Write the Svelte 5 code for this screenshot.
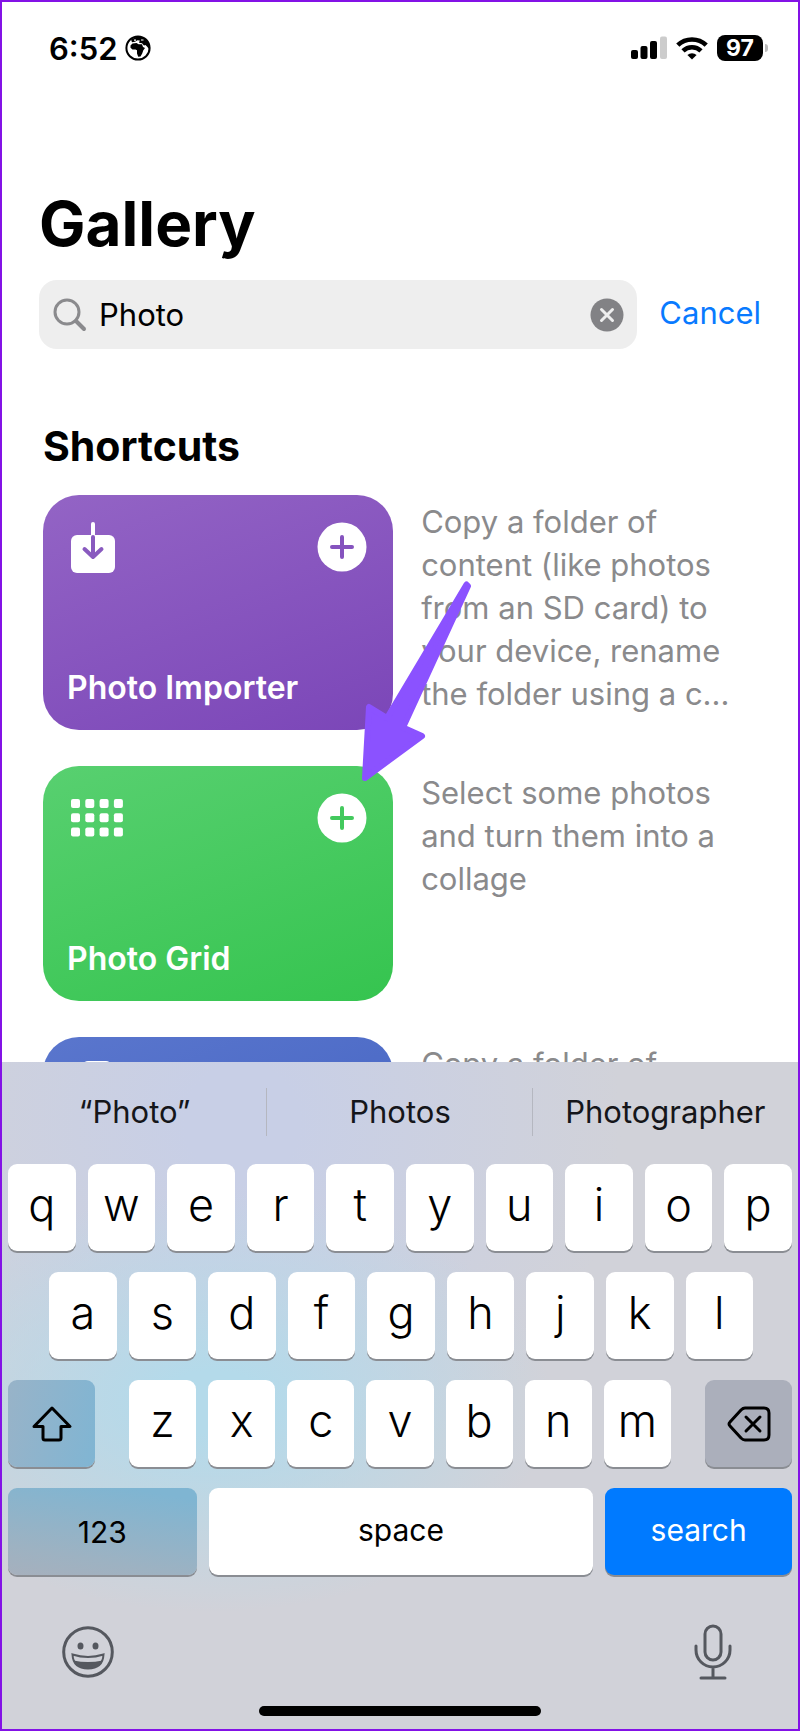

<script lang="ts">
  interface Shortcut {
    title: string;
    tone: string;
    icon: string;
    about: string;
  }

  const shortcuts: Shortcut[] = [
    {
      title: 'Photo Importer',
      tone: 'purple',
      icon: 'import',
      about:
        'Copy a folder of content (like photos from an SD card) to your device, rename the folder using a c...',
    },
    {
      title: 'Photo Grid',
      tone: 'green',
      icon: 'grid',
      about: 'Select some photos and turn them into a collage',
    },
    { title: '', tone: 'blue', icon: 'doc', about: 'Copy a folder of' },
  ];

  const suggestions = ['“Photo”', 'Photos', 'Photographer'];
  const topRow = [...'qwertyuiop'];
  const homeRow = [...'asdfghjkl'];
  const bottomRow = [...'zxcvbnm'];

  let query = $state('Photo');

  function press(key: string) {
    query += key;
  }
</script>

<div class="phone">
  <header class="status">
    <span class="time">6:52</span>
    <svg class="globe" viewBox="0 0 26 26" aria-hidden="true">
      <circle cx="13" cy="13" r="11.6" fill="#fff" stroke="#000" stroke-width="2" />
      <path d="M5.500 10.500 7.500 8.600 11.500 8 13.500 9.200 17 9.200 18 12 20 13 18.200 15.500 17.200 18.500 15.500 21.500 13.200 21.800 12 18.500 12 15.300 10.500 14.400 7.500 14.600 5.500 12.800Z" />
      <path d="M6 4.500 12 1.500 17 2 22 5 24.500 11 24 14 22 11.500 20.500 10 19 10.500 17 8.200 14 7.800 14.800 5.600 12.500 5.200 10 6.800 7 7.200Z" />
      <path d="M9 5.200h2M16 5h2.500" stroke="#fff" stroke-width="1.200" />
    </svg>
    <span class="spacer"></span>
    <svg class="signal" viewBox="0 0 36 24" aria-hidden="true">
      <rect x="0" y="14" width="7" height="9" rx="2" />
      <rect x="9.500" y="10" width="7" height="13" rx="2" />
      <rect x="19" y="5" width="7" height="18" rx="2" />
      <rect x="29" y="0.500" width="7" height="22.500" rx="2" fill="#ccc" />
    </svg>
    <svg class="wifi" viewBox="0 0 32 24" aria-hidden="true">
      <g fill="none" stroke="#000" stroke-width="4.600">
        <path d="M1.800 9.200a20.400 20.400 0 0 1 28.400 0" />
        <path d="M7 14.800a13 13 0 0 1 18 0" />
      </g>
      <path d="M16 23.500 11.400 19a6.800 6.800 0 0 1 9.200 0Z" />
    </svg>
    <span class="battery">97</span>
  </header>

  <main class="gallery">
    <h1>Gallery</h1>

    <form class="search" onsubmit={(e) => e.preventDefault()}>
      <div class="field">
        <svg class="lens" viewBox="0 0 34 34" aria-hidden="true">
          <circle cx="14" cy="14" r="12" />
          <path d="M23 23l8 8" stroke-width="4" />
        </svg>
        <input type="text" aria-label="Search gallery" bind:value={query} />
        <button type="button" class="clear" aria-label="Clear" onclick={() => (query = '')}>
          <svg viewBox="0 0 34 34" aria-hidden="true">
            <circle cx="17" cy="17" r="16.500" />
            <path d="M11.500 11.500l11 11M22.500 11.500l-11 11" />
          </svg>
        </button>
      </div>
      <button type="button" class="cancel">Cancel</button>
    </form>

    <section class="results">
      <h2>Shortcuts</h2>
      {#each shortcuts as item, i}
        <article class="row">
          <div class="card {item.tone}">
            <div class="card-top">
              {#if item.icon === 'import'}
                <svg class="glyph" viewBox="0 0 52 52" aria-hidden="true">
                  <rect x="0" y="13" width="44" height="38" rx="6" fill="#fff" />
                  <path d="M22 2v11" stroke="#fff" />
                  <path d="M22 15v19M13.500 27l8.500 8 8.500-8" stroke="#895abf" />
                </svg>
              {:else if item.icon === 'grid'}
                <svg class="glyph" viewBox="0 0 52 52" aria-hidden="true">
                  {#each [0, 1, 2] as r}
                    {#each [0, 1, 2, 3] as c}
                      <rect x={c * 14.3} y={6 + r * 14.3} width="9" height="9" rx="2" fill="#fff" />
                    {/each}
                  {/each}
                </svg>
              {:else}
                <svg class="glyph" viewBox="0 0 52 52" aria-hidden="true">
                  <rect x="11" y="-3" width="30" height="44" rx="6" fill="#fff" />
                </svg>
              {/if}
              <button class="add" aria-label="Add {item.title || 'shortcut'}">
                <svg viewBox="0 0 50 50" aria-hidden="true">
                  <circle cx="25" cy="25" r="24.500" fill="#fff" />
                  <path d="M25 15v20M15 25h20" />
                </svg>
              </button>
            </div>
            <h3>{item.title}</h3>
          </div>
          <p>{item.about}</p>
          {#if i === 0}
            <svg class="pointer" viewBox="0 0 70 206" aria-hidden="true">
              <path d="M104.500 6.500 25 140 7 129 3 200 60 158 41 149.500 106 8Z" />
            </svg>
          {/if}
        </article>
      {/each}
    </section>
  </main>

  <section class="keyboard" aria-label="Keyboard">
    <div class="suggestions">
      {#each suggestions as word}
        <button>{word}</button>
      {/each}
    </div>

    <div class="keys">
      <div class="key-row">
        {#each topRow as key}
          <button class="key" onclick={() => press(key)}>{key}</button>
        {/each}
      </div>
      <div class="key-row home">
        {#each homeRow as key}
          <button class="key" onclick={() => press(key)}>{key}</button>
        {/each}
      </div>
      <div class="key-row bottom">
        <button class="key shift" aria-label="Shift">
          <svg viewBox="0 0 42 38" aria-hidden="true">
            <path d="M21 3 39 21.500H30V33q0 2-2 2H14q-2 0-2-2V21.500H3Z" />
          </svg>
        </button>
        <div class="letters">
          {#each bottomRow as key}
            <button class="key" onclick={() => press(key)}>{key}</button>
          {/each}
        </div>
        <button class="key delete" aria-label="Delete" onclick={() => (query = query.slice(0, -1))}>
          <svg viewBox="0 0 44 38" aria-hidden="true">
            <path d="M18 3H37q5 0 5 5V30q0 5-5 5H18q-2 0-4-2L3 21q-2-2 0-4L14 5q2-2 4-2Z" />
            <path d="M19 12l14 14M33 12 19 26" />
          </svg>
        </button>
      </div>
      <div class="key-row words">
        <button class="key numbers">123</button>
        <button class="key space" onclick={() => press(' ')}>space</button>
        <button class="key go">search</button>
      </div>
    </div>

    <div class="tools">
      <button aria-label="Emoji">
        <svg class="emoji" viewBox="0 0 52 52" aria-hidden="true">
          <circle cx="26" cy="26" r="24.300" fill="none" stroke-width="3" />
          <ellipse cx="18.500" cy="20" rx="3" ry="3.500" stroke="none" />
          <ellipse cx="33.500" cy="20" rx="3" ry="3.500" stroke="none" />
          <path d="M10.500 28.500q15.500 5 31 0C41 38 35 42.500 26 42.500S11 38 10.500 28.500Z" fill="none" stroke-width="2" />
          <path d="M11.500 34.500q14.500 3 29 0C38 40 33 42.500 26 42.500S14 40 11.500 34.500Z" stroke="none" />
        </svg>
      </button>
      <button aria-label="Dictate">
        <svg class="mic" viewBox="0 0 38 56" aria-hidden="true">
          <rect x="11" y="2" width="16" height="34" rx="8" />
          <path d="M2 22v4a17 17 0 0 0 34 0v-4M19 43v10M7 54h24" />
        </svg>
      </button>
    </div>
    <div class="home-bar"></div>
  </section>
</div>

<style>
  :global(body) {
    margin: 0;
  }
  .phone {
    box-sizing: border-box;
    display: flex;
    flex-direction: column;
    height: 100vh;
    overflow: hidden;
    border: 2px solid #8312e6;
    background: #fff;
    color: #000;
    font-family: Inter, 'Liberation Sans', sans-serif;
  }
  button {
    margin: 0;
    padding: 0;
    border: none;
    background: none;
    color: inherit;
    font: inherit;
    cursor: pointer;
  }
  svg {
    display: block;
    flex: none;
  }

  .status {
    display: flex;
    align-items: center;
    height: 40px;
    padding: 26px 35px 0 47px;
  }
  .time {
    font-size: 31px;
    font-weight: 600;
  }
  .globe {
    width: 26px;
    height: 26px;
    margin-left: 7px;
  }
  .spacer {
    flex: 1;
  }
  .signal {
    width: 36px;
    height: 24px;
  }
  .wifi {
    width: 32px;
    height: 24px;
    margin: 0 9px;
  }
  .battery {
    position: relative;
    width: 46px;
    border-radius: 8px;
    background: #000;
    color: #fff;
    font-size: 23px;
    font-weight: 700;
    line-height: 26px;
    text-align: center;
  }
  .battery::after {
    content: '';
    position: absolute;
    top: 9px;
    right: -5px;
    width: 3px;
    height: 8px;
    border-radius: 0 4px 4px 0;
    background: #bbb;
  }

  .gallery {
    flex: 1;
    min-height: 0;
    overflow: hidden;
    padding: 118px 37px 0;
  }
  h1,
  h2,
  h3,
  p {
    margin: 0;
  }
  h1 {
    font-size: 62px;
    font-weight: 700;
    line-height: 76px;
  }
  .search {
    display: flex;
    align-items: center;
    gap: 22px;
    margin-top: 18px;
  }
  .field {
    flex: 1;
    min-width: 0;
    display: flex;
    align-items: center;
    height: 69px;
    padding: 0 13px 0 14px;
    border-radius: 18px;
    background: #eee;
  }
  .lens {
    width: 34px;
    height: 34px;
    fill: none;
    stroke: #8a8a8d;
    stroke-width: 3;
    stroke-linecap: round;
  }
  input {
    flex: 1;
    min-width: 0;
    padding: 0 12px;
    border: none;
    outline: none;
    background: none;
    color: inherit;
    font: inherit;
    font-size: 31px;
  }
  .clear svg {
    width: 34px;
    height: 34px;
    fill: #828285;
    stroke: none;
  }
  .clear path {
    stroke: #eee;
    stroke-width: 3;
    stroke-linecap: round;
  }
  .cancel {
    padding-bottom: 4px;
    color: #087aff;
    font-size: 31px;
  }

  .results {
    padding: 73px 4px 0;
  }
  h2 {
    margin-bottom: 25px;
    font-size: 41px;
    font-weight: 700;
    line-height: 48px;
  }
  .row {
    position: relative;
    display: grid;
    grid-template-columns: 49fr 47fr;
    gap: 28px;
    margin-bottom: 36px;
  }
  .card {
    box-sizing: border-box;
    display: flex;
    flex-direction: column;
    justify-content: space-between;
    height: 235px;
    padding: 27px 26px 22px 24px;
    border-radius: 36px;
    color: #fff;
  }
  .purple {
    background: linear-gradient(160deg, #9364c5, #7b46b8);
  }
  .green {
    background: linear-gradient(160deg, #58d070, #35c44f);
  }
  .blue {
    background: linear-gradient(160deg, #5a76cd, #3e5fc0);
  }
  .card-top {
    display: flex;
    justify-content: space-between;
    padding-left: 4px;
  }
  .glyph {
    width: 52px;
    height: 52px;
    overflow: visible;
    fill: none;
    stroke-width: 4;
    stroke-linecap: round;
    stroke-linejoin: round;
  }
  .glyph rect {
    stroke: none;
  }
  .add {
    height: 50px;
  }
  .add svg {
    width: 50px;
    height: 50px;
    stroke-width: 4;
    stroke-linecap: round;
  }
  .purple .add path {
    stroke: #8553be;
  }
  .green .add path {
    stroke: #43c95d;
  }
  .blue .add path {
    stroke: #4f6cc8;
  }
  h3 {
    font-size: 32px;
    font-weight: 600;
    line-height: 40px;
  }
  p {
    padding-top: 5px;
    color: #8a8a8c;
    font-size: 31px;
    line-height: 43px;
  }
  /* callout arrow aimed at the second card's add button */
  .pointer {
    position: absolute;
    top: 83px;
    left: 319px;
    z-index: 1;
    width: 70px;
    height: 206px;
    overflow: visible;
    fill: #8b52ff;
    stroke: #8b52ff;
    stroke-width: 6;
    stroke-linejoin: round;
  }

  .keyboard {
    z-index: 2;
    padding: 0 6px 13px;
    background:
      radial-gradient(ellipse 340px 210px at 210px 340px, #b4daea 15%, #b4daea00),
      radial-gradient(ellipse 380px 380px at 240px 60px, #c8cfe6 15%, #c8cfe600),
      #d1d2d9;
  }
  .suggestions {
    display: grid;
    grid-template-columns: repeat(3, 1fr);
    margin: 0 -6px;
    padding: 26px 0 28px;
  }
  .suggestions button {
    color: #15161a;
    font-size: 31px;
    line-height: 48px;
  }
  .suggestions button + button {
    box-shadow: -1px 0 #b5b7c0;
  }
  .keys {
    display: flex;
    flex-direction: column;
    gap: 21px;
  }
  .key-row,
  .letters {
    display: flex;
    flex: 1;
    gap: 12px;
  }
  .key {
    flex: 1;
    min-width: 0;
    display: flex;
    align-items: center;
    justify-content: center;
    box-sizing: border-box;
    height: 87px;
    padding-bottom: 6px;
    border-radius: 9px;
    background: #fff;
    box-shadow: 0 2px #8a8d93;
    font-size: 45px;
    font-weight: 300;
  }
  .home {
    padding: 0 39px 0 41px;
  }
  .bottom {
    gap: 34px;
  }
  .letters {
    flex: 1;
  }
  .shift,
  .delete {
    flex: none;
    width: 87px;
    padding: 0;
  }
  .shift {
    background: linear-gradient(100deg, #98b3c8, #80b5d3);
  }
  .delete {
    background: #abafbb;
  }
  .shift svg,
  .delete svg {
    height: 38px;
    fill: none;
    stroke: #000;
    stroke-width: 3;
    stroke-linecap: round;
    stroke-linejoin: round;
  }
  .words .key {
    padding-bottom: 4px;
    font-size: 30px;
    font-weight: 400;
  }
  .words .numbers {
    flex: 189;
    padding: 0;
    background: linear-gradient(190deg, #7fb5d2 10%, #9db2c2 75%, #a6b0bd);
  }
  .words .space {
    flex: 385;
  }
  .words .go {
    flex: 187;
    background: #007aff;
    color: #fff;
  }

  .tools {
    display: flex;
    align-items: center;
    justify-content: space-between;
    height: 56px;
    padding: 49px 60px 26px 54px;
  }
  .emoji {
    width: 52px;
    height: 52px;
    fill: #55585f;
    stroke: #55585f;
  }
  .mic {
    width: 38px;
    height: 56px;
    fill: none;
    stroke: #55585f;
    stroke-width: 3;
    stroke-linecap: round;
  }
  .home-bar {
    width: 36%;
    height: 10px;
    margin: 0 auto;
    border-radius: 5px;
    background: #000;
  }
</style>
